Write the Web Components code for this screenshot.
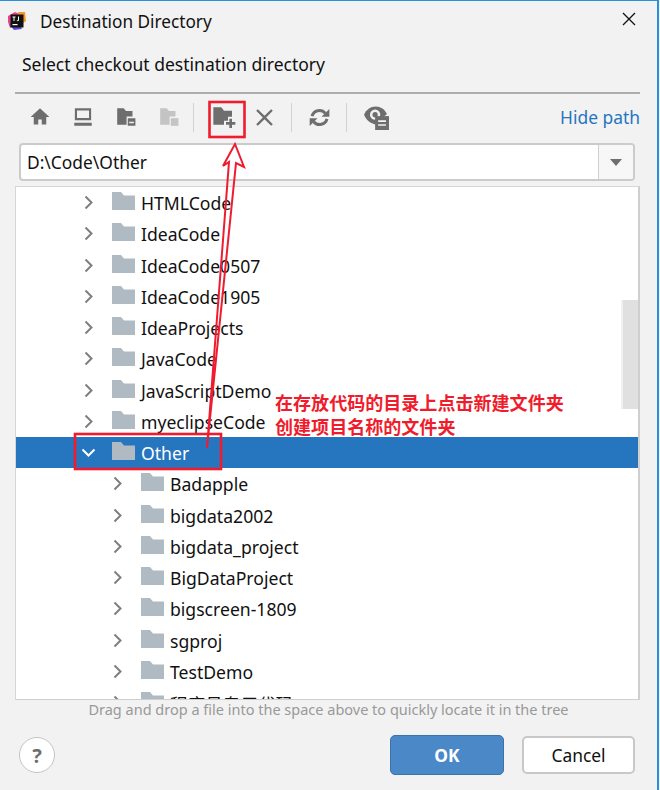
<!DOCTYPE html>
<html>
<head>
<meta charset="utf-8">
<title>Destination Directory</title>
<style>
  html, body { margin: 0; height: 100%; background: #f2f2f2; }
  body { font-family: "Noto Sans", "Noto Sans CJK SC", sans-serif; }
</style>
</head>
<body>
<dest-dialog>
  <tree-row level="1" name="HTMLCode"></tree-row>
  <tree-row level="1" name="IdeaCode"></tree-row>
  <tree-row level="1" name="IdeaCode0507"></tree-row>
  <tree-row level="1" name="IdeaCode1905"></tree-row>
  <tree-row level="1" name="IdeaProjects"></tree-row>
  <tree-row level="1" name="JavaCode"></tree-row>
  <tree-row level="1" name="JavaScriptDemo"></tree-row>
  <tree-row level="1" name="myeclipseCode"></tree-row>
  <tree-row level="1" name="Other" selected></tree-row>
  <tree-row level="2" name="Badapple"></tree-row>
  <tree-row level="2" name="bigdata2002"></tree-row>
  <tree-row level="2" name="bigdata_project"></tree-row>
  <tree-row level="2" name="BigDataProject"></tree-row>
  <tree-row level="2" name="bigscreen-1809"></tree-row>
  <tree-row level="2" name="sgproj"></tree-row>
  <tree-row level="2" name="TestDemo"></tree-row>
  <tree-row level="2" name="程序员专用代码"></tree-row>
</dest-dialog>

<script>
const ICONS = {
  home: '<path d="M8 1 0.5 8H3v6h3.6v-4h2.8v4H13V8h2.5z"/>',
  computer: '<path d="M1.500 1h13v9.500h-13zM3.200 2.700v6.100h9.600V2.700zM1 12.500h14V15H1z" fill-rule="evenodd"/>',
  folder: '<path d="M1 1h5.500l2 2.500H14V8H9v7H1z"/><path d="M10 9.500h6.500V16H10zM11.200 12.600v1.300h4v-1.300z" fill-rule="evenodd"/>',
  folderOff: '<path d="M1 1h5.500l2 2.500H14V8H9v7H1z"/><path d="M10 9.500h6.500V16H10z"/>',
  newFolder: '<path d="M1 1h6l2 2.500h6V8h-3v3H9v3H1z"/><path d="M13 9.500h2V12h2.500v2H15v2.500h-2V14h-2.500v-2H13z"/>',
  cross: '<path d="M2.400 1 8 6.600 13.600 1 15 2.400 9.400 8 15 13.600 13.600 15 8 9.400 2.400 15 1 13.600 6.600 8 1 2.400z"/>',
  refresh: '<path d="M2.300 7A5.800 5.800 0 0 1 12.400 4.800" style="fill:none;stroke:#6e6e6e;stroke-width:2.300"/><path d="M15.500 1.500v6h-6z"/><path d="M13.700 9A5.800 5.800 0 0 1 3.600 11.200" style="fill:none;stroke:#6e6e6e;stroke-width:2.300"/><path d="M.5 14.500v-6h6z"/>',
  eye: '<path d="M0 7C1.500 3.300 4.700 1 8.500 1c3.400 0 6.500 2 8 5.500L8 14C4.300 13 1.500 10.700 0 7z"/><circle cx="8" cy="7" r="3.700" fill="#f2f2f2"/><circle cx="8" cy="7" r="1.900"/><path d="M8 8h10v10H8z"/><path d="M10.200 11h5.600v1.200h-5.600zM10.200 13.800h5.600V15h-5.600z" fill="#f2f2f2"/>'
};

class ToolIcon extends HTMLElement {
  connectedCallback() {
    const name = this.getAttribute('icon');
    const size = this.getAttribute('size') || 20;
    const box = { folder: 17, folderOff: 17, newFolder: 18, eye: 18 }[name] || 16;
    this.attachShadow({mode: 'open'}).innerHTML = `
      <style>
        :host { display: flex; flex: none; align-items: center; justify-content: center; width: var(--slot, 43px); height: 24px; }
        svg { display: block; flex: none; fill: ${this.hasAttribute('disabled') ? '#c4c4c4' : '#6e6e6e'}; }
      </style>
      <svg width="${size}" height="${size}" viewBox="0 0 ${box} ${box}">${ICONS[name]}</svg>
    `;
  }
}
customElements.define('tool-icon', ToolIcon);

class ToolSep extends HTMLElement {
  connectedCallback() {
    this.attachShadow({mode: 'open'}).innerHTML = `
      <style>:host { display: block; flex: none; width: 1px; height: 29px; background: #d2d2d2; }</style>
    `;
  }
}
customElements.define('tool-sep', ToolSep);

class PathBar extends HTMLElement {
  connectedCallback() {
    this.attachShadow({mode: 'open'}).innerHTML = `
      <style>
        :host {
          display: flex; height: 34px; margin: 1px 5px 0 4px;
          background: #fff; border: 2px solid #cbcbcb; border-radius: 4px; overflow: hidden;
        }
        .text { flex: 1; padding-left: 6px; font-size: 17.400px; line-height: 35px; color: #111; }
        .drop {
          width: 34px; border-left: 1px solid #cfcfcf; background: #f7f7f7;
          display: flex; align-items: center; justify-content: center;
        }
        .drop i { border-left: 6.500px solid transparent; border-right: 6.500px solid transparent; border-top: 7px solid #6e6e6e; }
      </style>
      <div class="text">D:\\Code\\Other</div>
      <div class="drop"><i></i></div>
    `;
  }
}
customElements.define('path-bar', PathBar);

class TreeRow extends HTMLElement {
  connectedCallback() {
    const level = Number(this.getAttribute('level'));
    const open = this.hasAttribute('selected');
    this.attachShadow({mode: 'open'}).innerHTML = `
      <style>
        :host {
          display: flex; align-items: center; height: 31.250px; box-sizing: border-box;
          padding-left: ${65 + (level - 1) * 29}px;
          font-size: 17.600px; color: #111;
        }
        :host([selected]) { background: #2675bf; color: #fff; }
        .arrow { width: 15px; height: 15px; margin-right: 16px; display: block; fill: none; stroke: ${open ? '#fff' : '#7f7f7f'}; stroke-width: 2; }
        .folder { width: 23px; height: 18px; margin-right: 6px; display: block; fill: #afbac2; margin-top: -3px; }
        .name { margin-top: 1px; white-space: nowrap; }
      </style>
      <svg class="arrow" viewBox="0 0 15 15"><path d="${open ? 'M1.500 4.500 7.500 10.500 13.500 4.500' : 'M4.500 1.500 10.500 7.500 4.500 13.500'}"/></svg>
      <svg class="folder" viewBox="0 0 23 18"><path d="M0 0h9l3 3.500h11V18H0z"/></svg>
      <span class="name">${this.getAttribute('name')}</span>
    `;
  }
}
customElements.define('tree-row', TreeRow);

class DestDialog extends HTMLElement {
  connectedCallback() {
    this.attachShadow({mode: 'open'}).innerHTML = `
      <style>
        :host {
          display: block; position: relative; width: 659px; height: 790px; box-sizing: border-box;
          background: #f2f2f2; border-top: 1px solid #2b90dc; border-right: 2px solid #2b90dc;
          overflow: hidden; color: #111;
        }
        .title { display: flex; align-items: center; height: 40px; padding: 0 21px 0 7px; font-size: 17.200px; }
        .title .logo { width: 20px; height: 20px; margin-right: 13px; }
        .title span { flex: 1; }
        .title .close { width: 14px; height: 14px; margin-top: -4px; stroke: #111; stroke-width: 1.300; fill: none; }
        .prompt { padding-left: 22px; font-size: 17.500px; height: 51px; line-height: 46px; }
        .body { width: 625px; margin-left: 15px; }
        .toolbar { display: flex; align-items: center; height: 50px; border-top: 2px solid #adadad; box-sizing: border-box; padding: 0 0 2px 3px; }
        .toolbar a { margin-left: auto; font-size: 17.400px; color: #2675bf; }
        .tree {
          position: relative; height: 514px; margin-top: 5px; background: #fff; overflow: hidden; box-sizing: border-box;
          border: 2px solid #cfcfcf; border-width: 1px 2px 1px 1px; border-color: #d6d6d6 #cfcfcf #cfcfcf #d6d6d6;
        }
        .thumb { position: absolute; right: 0; top: 113px; width: 15px; height: 109px; background: #e0e0e0; border-left: 2px solid #f0f0f0; }
        .hint { text-align: center; font-size: 14.500px; color: #999; height: 24px; line-height: 19px; width: 625px; padding-left: 2px; box-sizing: border-box; }
        .footer { display: flex; align-items: center; padding: 11px 22px 0 19px; }
        .help {
          width: 34px; height: 34px; border-radius: 50%; background: #fff; border: 1px solid #c4c4c4;
          display: flex; align-items: center; justify-content: center; font-size: 20px; font-weight: 700; color: #6e6e6e;
        }
        .ok, .cancel {
          box-sizing: border-box; display: flex; align-items: center; justify-content: center; font-size: 17.400px; border-radius: 5px;
        }
        .ok { margin-left: auto; width: 114px; height: 40px; background: #4a88c7; border: 1px solid #3d73a8; color: #fff; font-weight: 700; }
        .cancel { margin-left: 18px; width: 113px; height: 38px; background: #fff; border: 2px solid #c8c8c8; color: #111; }
        .marks { position: absolute; left: 0; top: -1px; width: 660px; height: 790px; pointer-events: none; }
        .note {
          position: absolute; left: 275px; top: 389px; color: #f01c2c; font-size: 18.060px; font-weight: 700; line-height: 24px;
          font-family: "Noto Sans CJK SC", sans-serif; white-space: nowrap;
        }
      </style>
      <div class="title">
        <svg class="logo" viewBox="0 0 20 20">
          <path d="M1 5 8 1l5 2-4 8-6 6-2-6z" fill="#f0408c"/>
          <path d="M11 1h7l1 9-4 3z" fill="#f59a27"/>
          <path d="M2 13l5 6 8-1-5-8z" fill="#5b4be0"/>
          <rect x="3.500" y="3.500" width="13" height="13" fill="#111"/>
          <rect x="5.500" y="13" width="5" height="1.200" fill="#fff"/>
          <path d="M5.500 5.500h3v.900h-1V10h-1V6.400h-1zM11 5.500h1v3.600c0 .8-.6 1.100-1.200 1.100-.5 0-.9-.2-1.100-.5l.6-.6c.3.300.7.200.7-.2z" fill="#fff"/>
        </svg>
        <span>Destination Directory</span>
        <svg class="close" viewBox="0 0 14 14"><path d="M1 1 13 13M13 1 1 13"/></svg>
      </div>
      <div class="prompt">Select checkout destination directory</div>
      <div class="body">
        <div class="toolbar">
          <tool-icon icon="home"></tool-icon>
          <tool-icon icon="computer"></tool-icon>
          <tool-icon icon="folder"></tool-icon>
          <tool-icon icon="folderOff" disabled></tool-icon>
          <tool-sep style="margin-left:3px"></tool-sep>
          <tool-icon icon="newFolder" size="24" style="--slot:50px;margin-left:5px;margin-top:2px"></tool-icon>
          <tool-icon icon="cross" size="19" style="--slot:30px"></tool-icon>
          <tool-sep style="margin-left:12px"></tool-sep>
          <tool-icon icon="refresh" size="21" style="--slot:54px"></tool-icon>
          <tool-sep></tool-sep>
          <tool-icon icon="eye" size="25" style="--slot:58px"></tool-icon>
          <a>Hide path</a>
        </div>
        <path-bar></path-bar>
        <div class="tree">
          <slot></slot>
          <div class="thumb"></div>
        </div>
        <div class="hint">Drag and drop a file into the space above to quickly locate it in the tree</div>
      </div>
      <div class="footer">
        <div class="help">?</div>
        <div class="ok">OK</div>
        <div class="cancel">Cancel</div>
      </div>
      <svg class="marks" viewBox="0 0 660 790" fill="none" stroke="#ee1c2e">
        <rect x="209.500" y="102" width="35" height="35" stroke-width="2.600"/>
        <rect x="75" y="434" width="146" height="35" stroke-width="2.600"/>
        <path stroke-width="2" stroke-linejoin="miter" d="M235 144 244 167 236 163 207 448 229 162 223 166z"/>
      </svg>
      <div class="note">在存放代码的目录上点击新建文件夹<br>创建项目名称的文件夹</div>
    `;
  }
}
customElements.define('dest-dialog', DestDialog);
</script>
</body>
</html>
